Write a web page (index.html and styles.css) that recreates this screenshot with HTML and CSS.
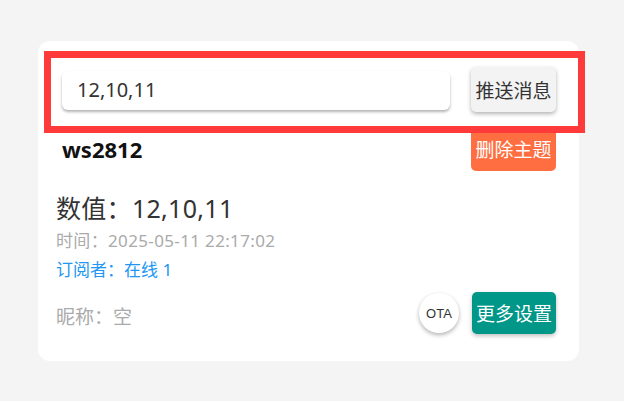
FILE: index.html
```html
<!DOCTYPE html>
<html lang="zh-CN">
<head>
    <meta charset="UTF-8">
    <meta name="viewport" content="width=device-width, initial-scale=1.0">
    <title>主题</title>
    <link rel="stylesheet" href="styles.css">
</head>
<body>
    <div class="card">
        <div class="send-row">
            <div class="msg-input">12,10,11</div>
            <button type="button" class="btn btn-send">推送消息</button>
        </div>

        <div class="topic-head">
            <span class="topic-name">ws2812</span>
            <button type="button" class="btn btn-delete">删除主题</button>
        </div>

        <div class="topic-body">
            <div class="value">数值：12,10,11</div>
            <div class="time">时间：2025-05-11 22:17:02</div>
            <div class="subs">订阅者：在线 1</div>

            <div class="foot">
                <span class="nick">昵称：空</span>
                <div class="actions">
                    <button type="button" class="ota">OTA</button>
                    <button type="button" class="btn btn-more">更多设置</button>
                </div>
            </div>
        </div>
    </div>
</body>
</html>
```

FILE: styles.css
```css
body {
    margin: 0;
    padding: 0;
    background-color: #f4f4f4;
    font-family: "Noto Sans", "Noto Sans CJK SC", sans-serif;
    color: #333;
}

.card {
    box-sizing: border-box;
    width: 541px;
    height: 320px;
    margin: 41px 0 0 38px;
    background-color: #fff;
    border-radius: 12px;
    padding-top: 17px;
}

.send-row {
    display: flex;
    align-items: flex-start;
    height: 68px;
    margin: 0 1px 0 13px;
    padding: 9px 22px 0 11px;
    box-sizing: border-box;
    outline: 7px solid #ff3a3a;
}

.msg-input {
    width: 388px;
    height: 39px;
    margin-top: 4px;
    padding-left: 15px;
    box-sizing: border-box;
    background-color: #fff;
    border-radius: 6px;
    box-shadow: 0 2px 3px rgba(0, 0, 0, 0.3);
    font-size: 20px;
    line-height: 38px;
    color: #333;
}

.btn {
    border: none;
    border-radius: 5px;
    padding: 0 4px;
    font-family: inherit;
    font-size: 19px;
    cursor: pointer;
}

.btn-send {
    margin-left: auto;
    width: 85px;
    height: 45px;
    background-color: #f3f3f3;
    color: #333;
    box-shadow: 0 2px 4px rgba(0, 0, 0, 0.3);
}

.topic-head {
    display: flex;
    justify-content: space-between;
    align-items: center;
    margin-top: 1px;
    padding: 0 23px 0 24px;
}

.topic-name {
    font-size: 22px;
    font-weight: bold;
    color: #111;
}

.btn-delete {
    width: 85px;
    height: 44px;
    background-color: #ff6e40;
    color: #fff;
}

.topic-body {
    padding: 0 23px 0 18px;
}

.value {
    margin-top: 21px;
    font-size: 25px;
    line-height: 32px;
    letter-spacing: 0.3px;
    color: #333;
}

.time {
    margin-top: 5px;
    font-size: 17px;
    line-height: 24px;
    letter-spacing: 0.35px;
    color: #aaa;
}

.subs {
    margin-top: 5px;
    font-size: 17px;
    line-height: 24px;
    color: #2196f3;
}

.foot {
    display: flex;
    justify-content: space-between;
    align-items: center;
    margin-top: 10px;
}

.nick {
    font-size: 19px;
    color: #aaa;
    padding-top: 6px;
}

.actions {
    display: flex;
    align-items: center;
    gap: 13px;
}

.ota {
    width: 40px;
    height: 40px;
    border: none;
    border-radius: 50%;
    background-color: #fff;
    box-shadow: 0 2px 4px rgba(0, 0, 0, 0.3);
    font-family: "Liberation Sans", sans-serif;
    font-size: 13px;
    color: #333;
    padding: 0;
}

.btn-more {
    width: 84px;
    height: 42px;
    background-color: #009688;
    color: #fff;
    box-shadow: 0 2px 4px rgba(0, 0, 0, 0.25);
}
```
